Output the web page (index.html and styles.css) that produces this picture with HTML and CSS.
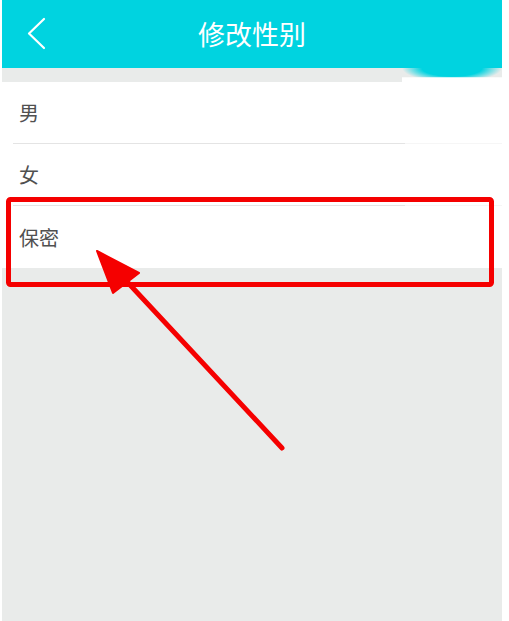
FILE: index.html
```html
<!DOCTYPE html>
<html lang="zh-CN">
<head>
<meta charset="utf-8">
<title>修改性别</title>
<link rel="stylesheet" href="styles.css">
</head>
<body>
<div class="screen">
  <header class="topbar">
    <div class="back">
      <svg width="20" height="34" viewBox="0 0 20 34"><polyline points="17,2 2,16.5 17,31" fill="none" stroke="#ffffff" stroke-width="2.2" stroke-linecap="round" stroke-linejoin="round"/></svg>
    </div>
    <h1 class="title">修改性别</h1>
    <div class="spacer"></div>
  </header>
  <div class="gap"><div class="blob"></div></div>
  <ul class="list">
    <li class="row">男</li>
    <li class="row">女</li>
    <li class="row last">保密</li>
  </ul>
  <div class="rest"></div>
</div>
<svg class="annot" width="509" height="621" viewBox="0 0 509 621">
  <rect x="8.5" y="199.5" width="483" height="85" rx="2" fill="none" stroke="#f50000" stroke-width="5"/>
  <line x1="282" y1="448" x2="118" y2="272" stroke="#f50000" stroke-width="5" stroke-linecap="round"/>
  <polygon points="97,251 139,273 113,293" fill="#f50000" stroke="#f50000" stroke-width="2" stroke-linejoin="round"/>
</svg>
</body>
</html>
```
FILE: styles.css
```css
html, body {
  margin: 0;
  padding: 0;
  background: #ffffff;
}
body {
  font-family: "Noto Sans CJK SC", "Noto Sans", sans-serif;
  width: 509px;
  height: 621px;
  overflow: hidden;
  position: relative;
}
.screen {
  width: 500px;
  margin-left: 2px;
  height: 621px;
  display: flex;
  flex-direction: column;
  background: #e9ebea;
}
.topbar {
  height: 68px;
  background: #00d3e0;
  display: grid;
  grid-template-columns: 1fr auto 1fr;
  align-items: center;
}
.back {
  padding-left: 25px;
  display: flex;
  align-items: center;
  height: 34px;
}
.title {
  margin: 0;
  font-size: 27px;
  font-weight: 400;
  color: #ffffff;
  letter-spacing: 0;
  line-height: 1;
  padding-bottom: 2px;
}
.gap {
  height: 14px;
  position: relative;
}
.blob {
  position: absolute;
  left: 400px;
  top: 0;
  width: 100px;
  height: 14px;
  background:
    linear-gradient(to bottom, rgba(255,255,255,0) 0, rgba(255,255,255,0) 62%, #ffffff 70%, #ffffff 100%),
    radial-gradient(ellipse 50% 100% at 50% 0, #00d3e0 0, #00d3e0 60%, rgba(0,211,224,0) 100%);
}
.list {
  list-style: none;
  margin: 0;
  padding: 0;
  background: #ffffff;
}
.row {
  height: 61px;
  display: flex;
  align-items: center;
  padding-left: 17px;
  font-size: 20px;
  color: #505050;
  border-bottom: 1px solid transparent;
  border-image: linear-gradient(to right, #ffffff 0, #ffffff 12px, #e4e4e4 12px, #e4e4e4 402px, #f6f6f6 402px, #f6f6f6 100%) 1;
}
.row.last {
  border-bottom: 1px solid #e9ebea;
  border-image: none;
  height: 62px;
}
.rest {
  flex: 1;
}
.annot {
  position: absolute;
  left: 0;
  top: 0;
  pointer-events: none;
}
```
